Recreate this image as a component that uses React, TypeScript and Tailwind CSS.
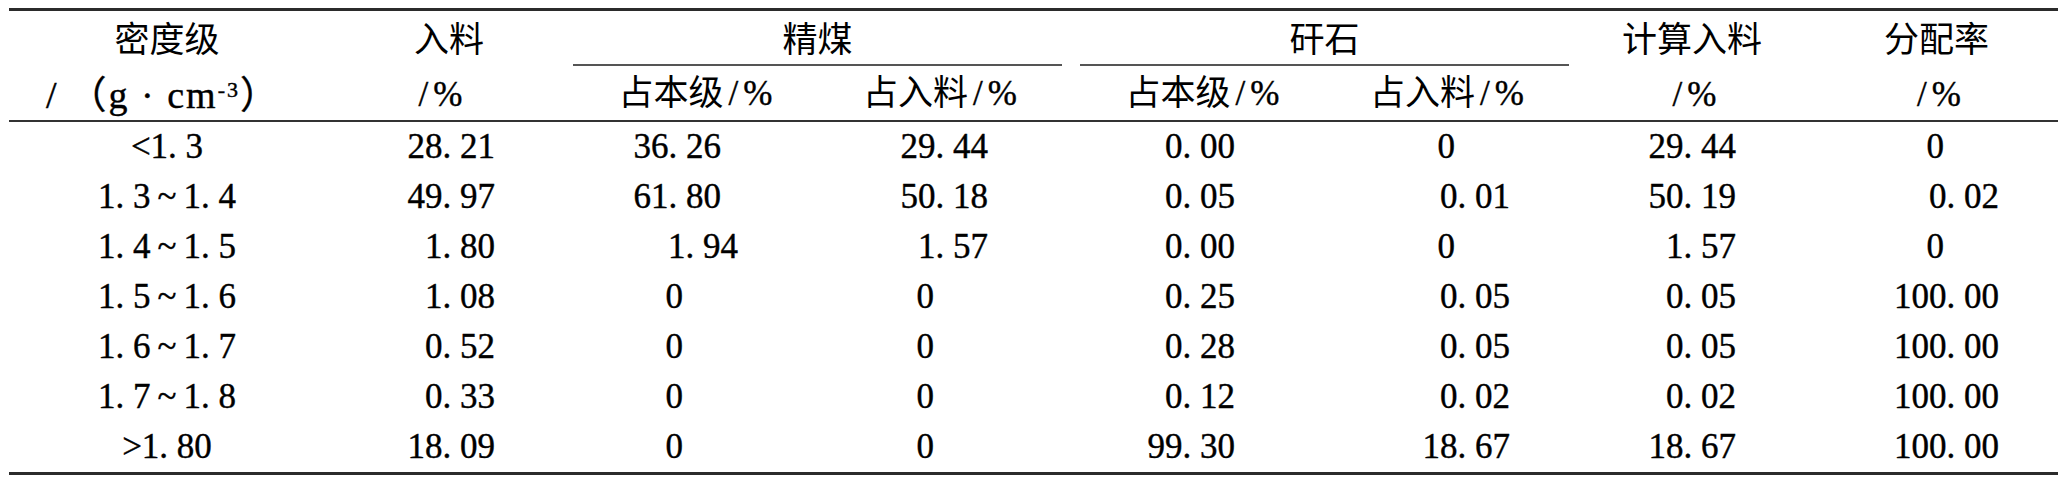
import React from 'react';

const cols = 'grid grid-cols-[316px_248px_245px_244px_18px_245px_244px_246px_243px]';

const Pct = () => (
  <span className="[-webkit-text-stroke:0.4px_black]">
    <span className="px-[5px]">/</span>%
  </span>
);

type Cell = { v: string; pr: string };

// right padding per cell, the typeset original is not strictly decimal aligned
const c = (v: string, pr: string): Cell => ({ v, pr });

const rows: Array<{ label: string; cells: Cell[] }> = [
  {
    label: '<1. 3',
    cells: [c('28. 21', 'pr-[78px]'), c('36. 26', 'pr-[97px]'), c('29. 44', 'pr-[74px]'), c('0. 00', 'pr-[90px]'), c('0', 'pr-[114px]'), c('29. 44', 'pr-[79px]'), c('0', 'pr-[114px]')],
  },
  {
    label: '1. 3\u2009~\u20091. 4',
    cells: [c('49. 97', 'pr-[78px]'), c('61. 80', 'pr-[97px]'), c('50. 18', 'pr-[74px]'), c('0. 05', 'pr-[90px]'), c('0. 01', 'pr-[59px]'), c('50. 19', 'pr-[79px]'), c('0. 02', 'pr-[59px]')],
  },
  {
    label: '1. 4\u2009~\u20091. 5',
    cells: [c('1. 80', 'pr-[78px]'), c('1. 94', 'pr-[80px]'), c('1. 57', 'pr-[74px]'), c('0. 00', 'pr-[90px]'), c('0', 'pr-[114px]'), c('1. 57', 'pr-[79px]'), c('0', 'pr-[114px]')],
  },
  {
    label: '1. 5\u2009~\u20091. 6',
    cells: [c('1. 08', 'pr-[78px]'), c('0', 'pr-[135px]'), c('0', 'pr-[128px]'), c('0. 25', 'pr-[90px]'), c('0. 05', 'pr-[59px]'), c('0. 05', 'pr-[79px]'), c('100. 00', 'pr-[59px]')],
  },
  {
    label: '1. 6\u2009~\u20091. 7',
    cells: [c('0. 52', 'pr-[78px]'), c('0', 'pr-[135px]'), c('0', 'pr-[128px]'), c('0. 28', 'pr-[90px]'), c('0. 05', 'pr-[59px]'), c('0. 05', 'pr-[79px]'), c('100. 00', 'pr-[59px]')],
  },
  {
    label: '1. 7\u2009~\u20091. 8',
    cells: [c('0. 33', 'pr-[78px]'), c('0', 'pr-[135px]'), c('0', 'pr-[128px]'), c('0. 12', 'pr-[90px]'), c('0. 02', 'pr-[59px]'), c('0. 02', 'pr-[79px]'), c('100. 00', 'pr-[59px]')],
  },
  {
    label: '>1. 80',
    cells: [c('18. 09', 'pr-[78px]'), c('0', 'pr-[135px]'), c('0', 'pr-[128px]'), c('99. 30', 'pr-[90px]'), c('18. 67', 'pr-[59px]'), c('18. 67', 'pr-[79px]'), c('100. 00', 'pr-[59px]')],
  },
];

const TwoLine = ({ top, bottom, extra = '' }: { top: React.ReactNode; bottom: React.ReactNode; extra?: string }) => (
  <div className="row-span-2 flex flex-col">
    <div className="h-[58px] flex items-center justify-center">{top}</div>
    <div className={`h-[51px] flex items-center justify-center ${extra}`}>{bottom}</div>
  </div>
);

export default function App() {
  return (
    <div className="bg-white w-[2064px] h-[480px] pt-[8px] pl-[9px] text-black font-[family-name:'Liberation_Serif','Noto_Sans_CJK_SC',serif]">
      <div className="w-[2049px] border-t-[3px] border-b-[3px] border-[#2b2b2b]">
        {/* header */}
        <div className={`${cols} grid-rows-[55px_54px] border-b-2 border-[#333] text-[35px] leading-none`}>
          <TwoLine
            top="密度级"
            extra="pr-[8px]"
            bottom={
              <span className="text-[38px] tracking-[2px] [-webkit-text-stroke:0.4px_black]">
                /<span className="ml-[10px]">（g · cm</span>
                <sup className="text-[22px]">-3</sup>）
              </span>
            }
          />
          <TwoLine top="入料" bottom={<Pct />} extra="pr-[22px]" />
          <div className="col-span-2 border-b-2 border-[#555] pt-[5px] flex items-center justify-center">精煤</div>
          <div className="row-span-2" />
          <div className="col-span-2 border-b-2 border-[#555] pt-[5px] flex items-center justify-center">矸石</div>
          <TwoLine top="计算入料" bottom={<Pct />} />
          <TwoLine top="分配率" bottom={<Pct />} />
          <div className="flex items-center justify-center">
            占本级<Pct />
          </div>
          <div className="flex items-center justify-center">
            占入料<Pct />
          </div>
          <div className="flex items-center justify-center">
            占本级<Pct />
          </div>
          <div className="flex items-center justify-center">
            占入料<Pct />
          </div>
        </div>

        {/* body */}
        <div className="text-[35px] leading-[50px] [-webkit-text-stroke:0.4px_black]">
          {rows.map((r) => (
            <div key={r.label} className={`${cols} h-[50px]`}>
              <div className="flex justify-center whitespace-pre">{r.label}</div>
              {r.cells.slice(0, 3).map((x, i) => (
                <div key={i} className={`flex justify-end whitespace-pre ${x.pr}`}>
                  {x.v}
                </div>
              ))}
              <div />
              {r.cells.slice(3).map((x, i) => (
                <div key={i + 3} className={`flex justify-end whitespace-pre ${x.pr}`}>
                  {x.v}
                </div>
              ))}
            </div>
          ))}
        </div>
      </div>
    </div>
  );
}
